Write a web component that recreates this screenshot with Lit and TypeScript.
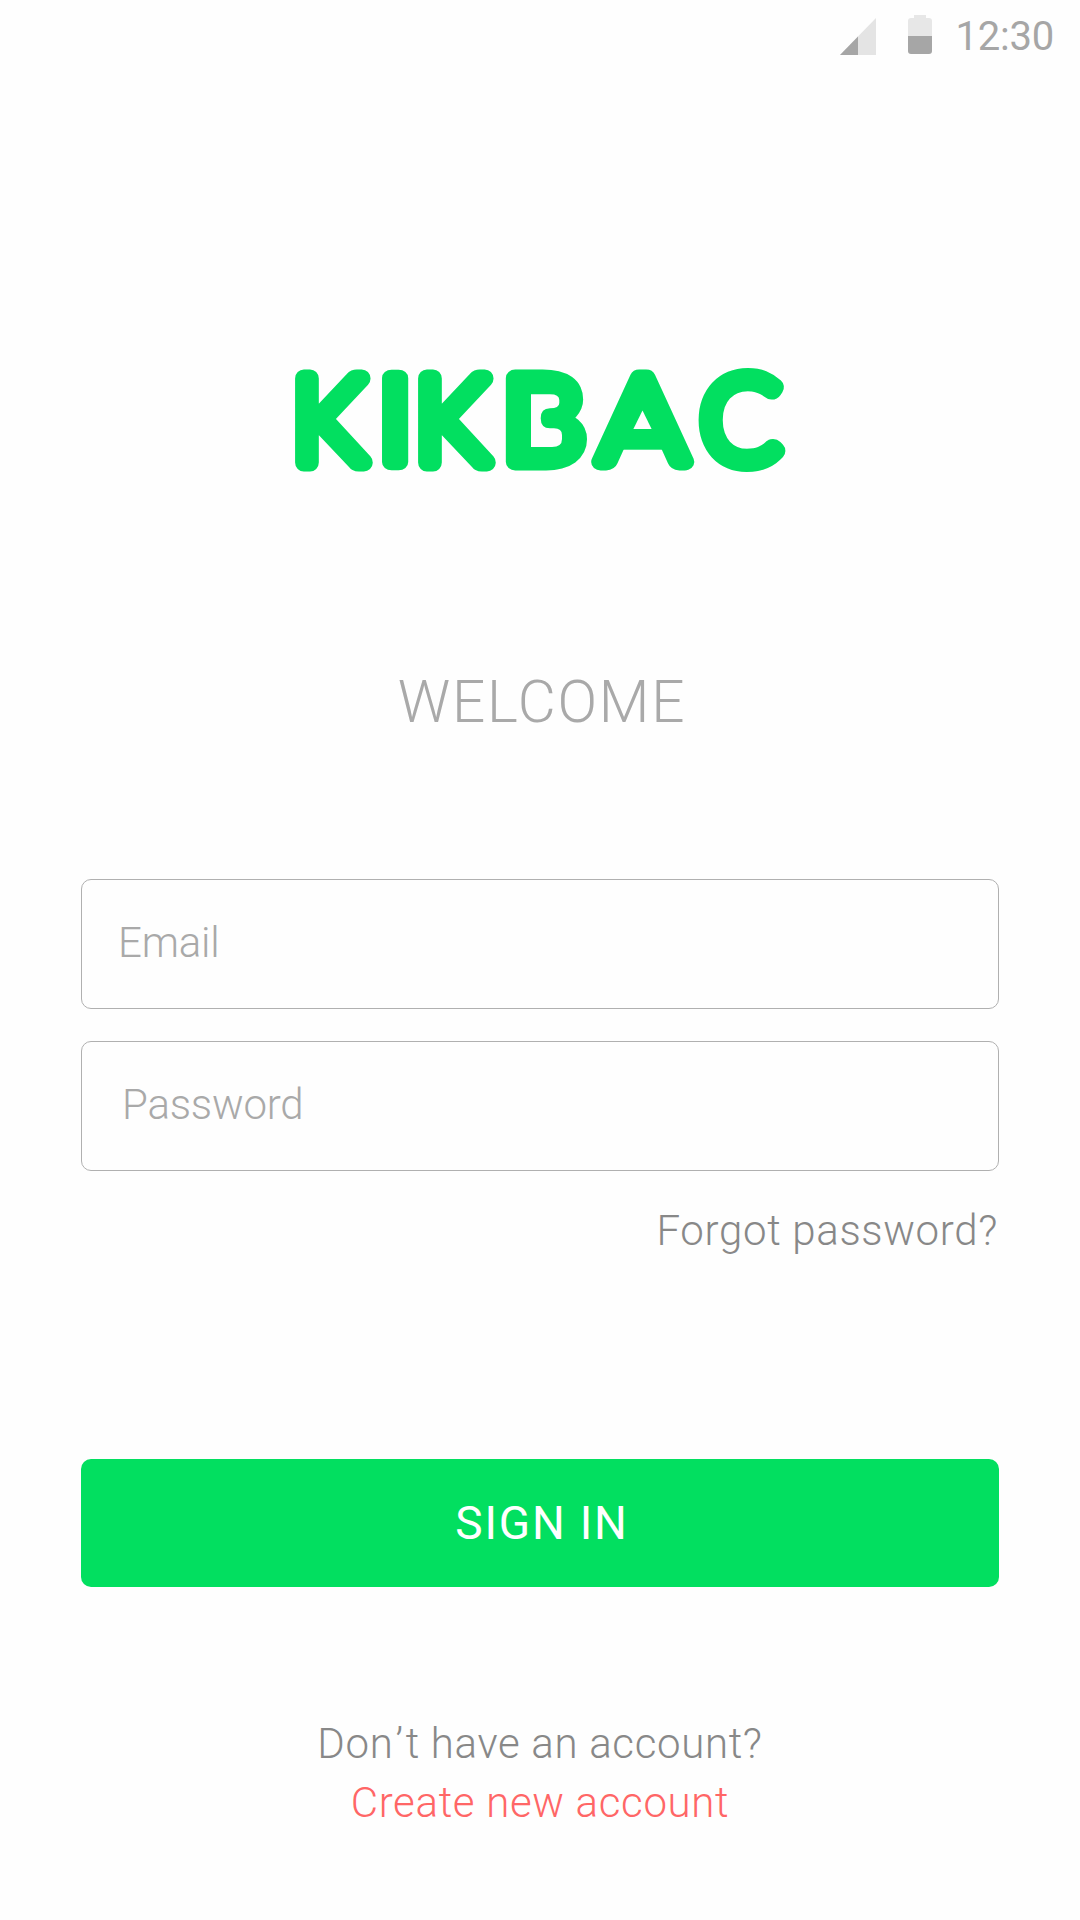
import { LitElement, html, svg, css } from "lit";
import { customElement } from "lit/decorators.js";

/* Wordmark letters: left origin and horizontal stretch of each glyph. */
const LETTERS: { char: string; x: number; stretch: number }[] = [
  { char: "K", x: -2, stretch: 0.977 },
  { char: "I", x: 83.5, stretch: 1.15 },
  { char: "K", x: 121, stretch: 0.977 },
  { char: "B", x: 207.5, stretch: 1.13 },
  { char: "A", x: 305, stretch: 1.135 },
  { char: "C", x: 406.8, stretch: 1 },
];

@customElement("app-root")
export class AppRoot extends LitElement {
  static styles = css`
    :host {
      display: block;
      font-family: Roboto, "Liberation Sans", sans-serif;
      font-weight: 300;
    }
    .screen {
      display: flex;
      flex-direction: column;
      box-sizing: border-box;
      width: 1080px;
      height: 1920px;
      background: #fefefe;
      overflow: hidden;
    }
    .status {
      display: flex;
      justify-content: flex-end;
      height: 72px;
      padding-right: 26px;
      color: #a6a6a6;
      font-size: 40px;
      font-weight: 400;
      line-height: 74px;
      letter-spacing: -0.2px;
    }
    .signal {
      width: 36px;
      height: 37px;
      margin: 18px 32px 0 0;
    }
    .battery {
      width: 24px;
      height: 40px;
      margin: 15px 23px 0 0;
    }
    .logo {
      display: block;
      width: 492px;
      height: 103px;
      margin: 297px 0 0 294px;
      overflow: visible;
    }
    .letter {
      font-family: Lato, sans-serif;
      font-weight: 300;
      font-size: 117.5px;
      fill: #02df60;
      stroke: #02df60;
      stroke-width: 18px;
      stroke-linejoin: round;
      vector-effect: non-scaling-stroke;
    }
    .patch {
      fill: #02df60;
    }
    .counter {
      fill: #fefefe;
    }
    .welcome {
      margin: 196px 0 0;
      padding-left: 4px;
      text-align: center;
      color: #a9a9a9;
      font-size: 58.5px;
      font-weight: 300;
      line-height: 68px;
      letter-spacing: 1.75px;
    }
    .form {
      display: flex;
      flex-direction: column;
      margin: 143px 81px 0;
    }
    .field {
      display: flex;
      align-items: center;
      box-sizing: border-box;
      height: 130px;
      padding: 0 36px 3px;
      border: 1px solid #b0b0b0;
      border-radius: 10px;
      color: #a9a9a9;
      font-size: 42px;
      letter-spacing: -0.2px;
    }
    .field + .field {
      margin-top: 32px;
      padding-left: 40px;
    }
    .forgot {
      align-self: flex-end;
      margin: 35px 1px 0 0;
      color: #888;
      font-size: 42px;
      line-height: 50px;
      letter-spacing: 0.66px;
    }
    .submit {
      margin-top: 203px;
      height: 128px;
      padding: 0 0 0 4px;
      border: 0;
      border-radius: 10px;
      background: #02df60;
      color: #fff;
      font: 400 46px/128px Roboto, sans-serif;
      letter-spacing: 1.8px;
    }
    .footer {
      display: flex;
      flex-direction: column;
      align-items: center;
      margin-top: 128px;
      color: #888;
      font-size: 42px;
      line-height: 58.5px;
      letter-spacing: 0.67px;
    }
    .apostrophe {
      margin: 0 2px 0 2px;
    }
    .create {
      color: #ff6666;
    }
  `;

  render() {
    return html`
      <main class="screen">
        <header class="status">
          <svg class="signal" viewBox="0 0 36 37">
            <path d="M0 37L36 0V37Z" fill="#e4e4e4" />
            <path d="M0 37L18 18.5V37Z" fill="#a6a6a6" />
          </svg>
          <svg class="battery" viewBox="0 0 24 40">
            <path d="M0 21V6Q0 3 3 3H6V0H18V3H21Q24 3 24 6V21Z" fill="#e7e7e7" />
            <path d="M0 21H24V36Q24 39 21 39H3Q0 39 0 36Z" fill="#a6a6a6" />
          </svg>
          <span>12:30</span>
        </header>
        <svg class="logo" viewBox="0 0 492 103" role="img" aria-label="KIKBAC">
          ${LETTERS.map(
            (l) => svg`<text class="letter" transform="translate(${l.x} 93) scale(${l.stretch} 1)">${l.char}</text>`
          )}
          <rect class="patch" x="234" y="20" width="38" height="64" />
          <path
            class="counter"
            d="M237 25.3H256Q265.3 25.3 265.3 31V34Q265.3 39.3 256 39.3Q246.7 39.3 246.7 49.3Q246.7 59.3 256 59.3H260Q268 59.3 268 66V70Q268 78 258 78H237Z"
          />
          <rect class="patch" x="336" y="30" width="25" height="40" />
          <rect class="patch" x="327" y="64" width="43" height="16.7" />
          <path class="counter" d="M348.5 41.5L357.6 60H339.4Z" />
        </svg>
        <h1 class="welcome">WELCOME</h1>
        <section class="form">
          <label class="field"><span>Email</span></label>
          <label class="field"><span>Password</span></label>
          <a class="forgot">Forgot password?</a>
          <button class="submit">SIGN IN</button>
        </section>
        <footer class="footer">
          <span>Don<span class="apostrophe">’</span>t have an account?</span>
          <a class="create">Create new account</a>
        </footer>
      </main>
    `;
  }
}
